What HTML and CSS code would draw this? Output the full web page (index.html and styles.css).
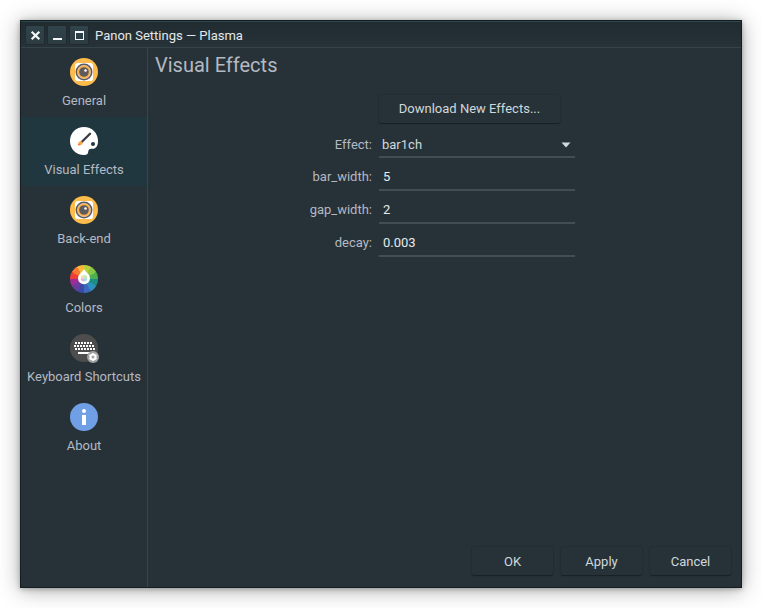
FILE: index.html
```html
<!DOCTYPE html>
<html lang="en">
<head>
<meta charset="utf-8">
<title>Panon Settings — Plasma</title>
<link rel="stylesheet" href="styles.css">
</head>
<body>
<svg class="defs" width="0" height="0" aria-hidden="true">
  <symbol id="eye" viewBox="0 0 28 28">
    <circle cx="14" cy="14" r="14" fill="#fdbc4b"/>
    <rect x="5" y="5" width="18" height="18" rx="2.500" fill="#fff"/>
    <circle cx="14" cy="14" r="8.500" fill="#5f5a5c"/>
    <circle cx="14" cy="14" r="6.900" fill="#d9d2ca"/>
    <circle cx="14" cy="14" r="6.500" fill="#fdb04b"/>
    <circle cx="14" cy="14" r="4.800" fill="#5f5a5c"/>
    <circle cx="15.500" cy="12.500" r="1.300" fill="#fff"/>
  </symbol>
</svg>
<div class="window">
  <header class="titlebar">
    <button class="control" aria-label="Close"><svg width="18" height="18"><path d="M5.700 5.700l7.600 7.600M13.300 5.700l-7.600 7.600" stroke="#f4f7f7" stroke-width="2.200"/></svg></button>
    <button class="control" aria-label="Minimize"><svg width="18" height="18"><path d="M5 13h9" stroke="#f4f7f7" stroke-width="2"/></svg></button>
    <button class="control" aria-label="Maximize"><svg width="18" height="18"><path d="M5 5h9v2H5zM5 5h1v9H5zM13 5h1v9h-1zM5 13h9v1H5z" fill="#f4f7f7"/></svg></button>
    <span class="title">Panon Settings — Plasma</span>
  </header>
  <div class="body">
    <nav class="sidebar">
      <a class="item"><svg class="icon"><use href="#eye"/></svg><span>General</span></a>
      <a class="item active">
        <svg class="icon" viewBox="0 0 28 28">
          <path d="M14 0C6 0 0 6 0 14s6 14 14 14c3 0 4-1 4.200-3 .1-2.500 1.500-3.500 4-3.200C26 22 28 19 28 14 28 6 22 0 14 0z" fill="#fff"/>
          <circle cx="23" cy="17" r="2" fill="#203740"/>
          <path d="M20 6.700 11.700 15" stroke="#3c3b3d" stroke-width="2.300" stroke-linecap="round"/>
          <path d="M11.600 14.200q1.500 1.400.7 2.900Q11 18.600 8 18.200q.2-3.200 1.700-4 .9-.5 1.900 0z" fill="#fda43c"/>
          <path d="M8 18.200l.3-1.700 2 .8-.4 1z" fill="#f67442"/>
        </svg><span>Visual Effects</span></a>
      <a class="item"><svg class="icon"><use href="#eye"/></svg><span>Back-end</span></a>
      <a class="item"><span class="icon wheel"><svg width="28" height="28" viewBox="0 0 28 28">
        <path d="M14 4c2 3.500 6 5.500 6 9.300a6 6 0 0 1-12 0C8 9.500 12 7.500 14 4z" fill="#fff"/>
        <path d="M14 10v3.300h-3.300A3.300 3.300 0 0 1 14 10z" fill="#fcdda8"/>
        <path d="M14 10a3.300 3.300 0 0 1 3.300 3.300H14z" fill="#c4e8b0"/>
        <path d="M10.700 13.300H14v3.300a3.300 3.300 0 0 1-3.300-3.300z" fill="#ecb2cf"/>
        <path d="M17.300 13.300H14v3.300a3.300 3.300 0 0 0 3.300-3.300z" fill="#a6dce5"/>
      </svg></span><span>Colors</span></a>
      <a class="item">
        <svg class="icon" viewBox="0 0 28 28">
          <circle cx="14" cy="14" r="14" fill="#4d4d4d"/>
          <path d="M5 9h18M4 12h21M5 15h20" stroke="#fff" stroke-width="2" stroke-dasharray="2 1"/>
          <path d="M8 19h12" stroke="#fff" stroke-width="2"/>
          <circle cx="23" cy="23" r="6" fill="#a2a2a2"/>
          <circle cx="23" cy="23" r="2.500" fill="none" stroke="#fff" stroke-width="2"/>
          <path d="M23 19v1M23 26v1M19.500 21l.9.5M25.600 24.500l.9.5M26.500 21l-.9.500M20.400 24.500l-.9.500" stroke="#fff" stroke-width="1.500"/>
        </svg><span>Keyboard Shortcuts</span></a>
      <a class="item">
        <svg class="icon" viewBox="0 0 28 28">
          <circle cx="14" cy="14" r="14" fill="#709fe5"/>
          <circle cx="14" cy="8" r="2" fill="#fff"/>
          <path d="M12 12h4v10h-4z" fill="#fff"/>
        </svg><span>About</span></a>
    </nav>
    <main class="content">
      <h1>Visual Effects</h1>
      <button class="button download">Download New Effects...</button>
      <form class="form">
        <label>Effect:</label>
        <div class="field combo"><span>bar1ch</span><svg width="10" height="6"><path d="M.5.500h9L5 5.500z" fill="#cfd8dc"/></svg></div>
        <label>bar_width:</label><div class="field">5</div>
        <label>gap_width:</label><div class="field">2</div>
        <label>decay:</label><div class="field">0.003</div>
      </form>
      <footer class="actions">
        <button class="button">OK</button>
        <button class="button">Apply</button>
        <button class="button">Cancel</button>
      </footer>
    </main>
  </div>
</div>
</body>
</html>
```
FILE: styles.css
```css
* { box-sizing: border-box; }

body {
  margin: 0;
  padding: 20px;
  height: 608px;
  overflow: hidden;
  background: #fff;
  color: #b4b9c2;
  font: 13px/16px Roboto, "Noto Sans", sans-serif;
}

button { font: inherit; border: 0; padding: 0; }
.defs { position: absolute; }

.window {
  display: flex;
  flex-direction: column;
  width: 722px;
  height: 568px;
  border: 1px solid #141d21;
  background: #273238;
  box-shadow: 0 2px 20px rgba(0, 0, 0, .34), 0 1px 5px rgba(0, 0, 0, .28);
}

.titlebar {
  display: flex;
  align-items: center;
  flex: none;
  gap: 2px;
  height: 27px;
  padding: 0 4px;
  border-top: 1px solid #2d454d;
  border-bottom: 1px solid #35434a;
  background: linear-gradient(#212c31, #273238);
}

.control {
  width: 20px;
  height: 20px;
  border: 1px solid #202a2f;
  border-radius: 2px;
  background: linear-gradient(#30434b, #2d3c43);
}
.control svg { display: block; }

.title { margin: 3px 0 0 4px; color: #e4e8ea; }

.body { display: flex; flex: 1; min-height: 0; }

.sidebar {
  width: 127px;
  flex: none;
  border-right: 1px solid #37464d;
}

.item {
  display: flex;
  flex-direction: column;
  align-items: center;
  height: 69px;
  padding-top: 10px;
  gap: 7px;
  white-space: nowrap;
}
.item.active { background: #203740; }
.icon { display: block; width: 28px; height: 28px; overflow: visible; }

.wheel {
  border-radius: 50%;
  background: conic-gradient(#b9cf3b 0 30deg, #87c846 30deg 60deg, #4caf50 60deg 90deg, #1b8f86 90deg 120deg, #2f8fbd 120deg 150deg, #3b69bd 150deg 180deg, #3d4aa5 180deg 210deg, #6a3d9c 210deg 240deg, #9d2d94 240deg 270deg, #f03e37 270deg 300deg, #f87931 300deg 330deg, #fbb836 330deg);
}

.content {
  display: flex;
  flex-direction: column;
  flex: 1;
  padding: 5px 10px 12px 7px;
}

h1 {
  margin: 0;
  height: 24px;
  font-size: 20px;
  line-height: 24px;
  font-weight: 400;
}

.button {
  width: 81px;
  height: 28px;
  padding-top: 1px;
  border-radius: 2px;
  background: #273238;
  color: #cfd8dc;
  box-shadow: 0 0 1px 1px rgba(22, 31, 35, .18), 0 1px 1px rgba(12, 18, 21, .5);
}

.download { width: 181px; flex: none; margin: 18px 0 0 224px; padding: 0; }

.form {
  display: grid;
  grid-template-columns: 217px 196px;
  grid-template-rows: 31px 27px 27px 27px;
  gap: 6px 7px;
  margin-top: 4px;
}
.form label { text-align: right; padding-top: 10px; }
.form label:nth-of-type(n+2) { padding-top: 5px; }

.field {
  border-bottom: 2px solid #434e54;
  padding: 5px 4px 0;
  color: #e6eaec;
}
.combo {
  display: flex;
  justify-content: space-between;
  padding: 10px 4px 0 3px;
  color: #cfd8dc;
}
.combo svg { margin-top: 5px; }

.actions { display: flex; justify-content: flex-end; gap: 8px; margin-top: auto; }
```
